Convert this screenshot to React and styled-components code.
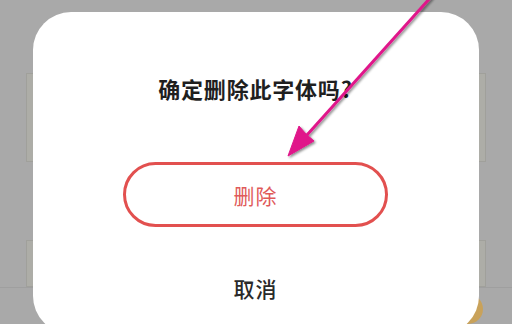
import React from 'react';
import styled, { createGlobalStyle } from 'styled-components';

const GlobalStyle = createGlobalStyle`
  html, body {
    margin: 0;
    padding: 0;
    overflow: hidden;
  }
  #root {
    width: 512px;
    height: 324px;
  }
  * {
    box-sizing: border-box;
  }
`;

const Page = styled.div`
  position: relative;
  width: 512px;
  height: 324px;
  overflow: hidden;
  background: #a9a9a9;
  padding-top: 73px;
  display: flex;
  flex-direction: column;
  font-family: "Noto Sans CJK SC", "Noto Sans", sans-serif;
`;

const Card = styled.div`
  margin: 0 26px;
  height: ${({ h }) => h}px;
  margin-bottom: ${({ gap }) => gap || 0}px;
  background: #adada7;
  border: 1px solid #a0a09b;
`;

const Divider = styled.div`
  height: 1px;
  background: #9f9f9f;
`;

const Fab = styled.div`
  position: absolute;
  right: 29px;
  top: 294px;
  width: 30px;
  height: 30px;
  border-radius: 50%;
  background: #c9a25a;
`;

const Overlay = styled.div`
  position: absolute;
  inset: 0;
  display: flex;
  justify-content: center;
  align-items: flex-start;
  padding-top: 12px;
`;

const Dialog = styled.div`
  width: 446px;
  height: 322px;
  margin-left: -1px;
  background: #ffffff;
  border-radius: 38px;
  display: flex;
  flex-direction: column;
  align-items: center;
  padding-top: 64px;
`;

const Title = styled.div`
  font-size: 22px;
  line-height: 24px;
  font-weight: 700;
  color: #1f1f1f;
  letter-spacing: 0.8px;
`;

const DangerButton = styled.button`
  margin-top: 62px;
  width: 265px;
  height: 65px;
  border: 3px solid #e2504f;
  border-radius: 33px;
  background: #fff;
  color: #e05a5a;
  font-family: inherit;
  font-size: 21px;
  letter-spacing: 1px;
  cursor: pointer;
`;

const TextButton = styled.button`
  margin-top: 49px;
  border: none;
  background: none;
  padding: 0;
  color: #2a2a2a;
  font-family: inherit;
  font-size: 21px;
  line-height: 24px;
  font-weight: 500;
  letter-spacing: 1px;
  cursor: pointer;
`;

const ArrowLayer = styled.svg`
  position: absolute;
  left: 0;
  top: 0;
  pointer-events: none;
`;

function Arrow() {
  return (
    <ArrowLayer width="512" height="324" viewBox="0 0 512 324">
      <defs>
        <filter id="shade" x="-20%" y="-20%" width="140%" height="140%">
          <feDropShadow dx="1.5" dy="1.5" stdDeviation="1" floodColor="#000" floodOpacity="0.45" />
        </filter>
      </defs>
      <g filter="url(#shade)" fill="#e0158a" stroke="#e0158a">
        <line x1="431" y1="-3" x2="298" y2="145" strokeWidth="3" strokeLinecap="round" />
        <polygon points="288,156 299,126 306,134 314,141" strokeWidth="1" strokeLinejoin="round" />
      </g>
    </ArrowLayer>
  );
}

export default function App() {
  return (
    <>
      <GlobalStyle />
      <Page>
        <Card h={89} gap={78} />
        <Card h={47} />
        <Divider />
        <Fab />
        <Overlay>
          <Dialog>
            <Title>确定删除此字体吗?</Title>
            <DangerButton>删除</DangerButton>
            <TextButton>取消</TextButton>
          </Dialog>
        </Overlay>
        <Arrow />
      </Page>
    </>
  );
}
